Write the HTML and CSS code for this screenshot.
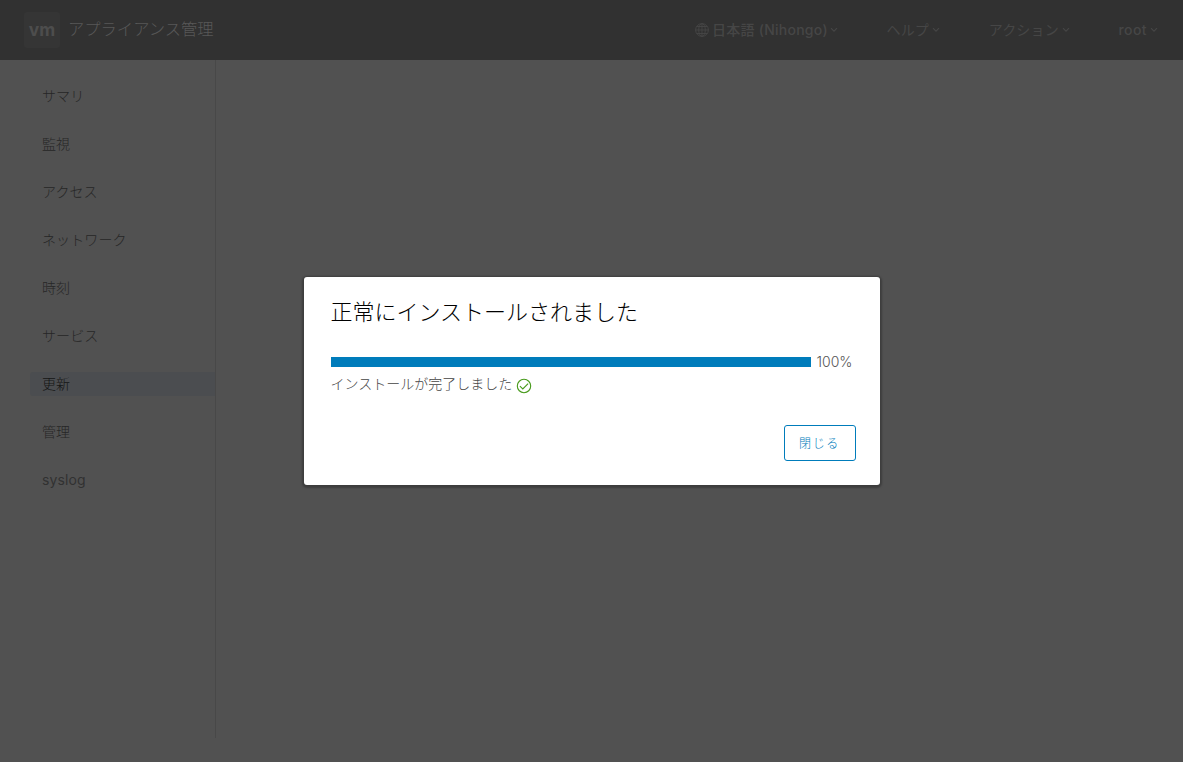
FILE: index.html
```html
<!DOCTYPE html>
<html lang="ja">
<head>
<meta charset="utf-8">
<title>アプライアンス管理</title>
<link rel="stylesheet" href="styles.css">
</head>
<body>
<div class="app">
  <header class="header">
    <span class="logo">vm</span>
    <h1 class="title">アプライアンス管理</h1>
    <nav class="actions">
      <span class="action">
        <svg class="globe" width="14" height="14" viewBox="0 0 14 14" fill="none" stroke="#464646" stroke-width=".9"><circle cx="7" cy="7" r="6.4"/><ellipse cx="7" cy="7" rx="3.3" ry="6.4"/><path d="M7 .6V13.4M1.6 3.5H12.4M.6 7H13.4M1.6 10.5H12.4"/></svg>
        <span class="language">日本語 (Nihongo)</span>
        <svg class="caret" width="8" height="6" viewBox="0 0 8 6"><path d="M1 1.2L4 4.2L7 1.2"/></svg>
      </span>
      <span class="action"><span class="kana">ヘルプ</span><svg class="caret" width="8" height="6" viewBox="0 0 8 6"><path d="M1 1.2L4 4.2L7 1.2"/></svg></span>
      <span class="action"><span class="kana">アクション</span><svg class="caret" width="8" height="6" viewBox="0 0 8 6"><path d="M1 1.2L4 4.2L7 1.2"/></svg></span>
      <span class="action"><span class="user">root</span><svg class="caret" width="8" height="6" viewBox="0 0 8 6"><path d="M1 1.2L4 4.2L7 1.2"/></svg></span>
    </nav>
  </header>
  <aside class="sidebar">
    <a class="item">サマリ</a>
    <a class="item">監視</a>
    <a class="item">アクセス</a>
    <a class="item">ネットワーク</a>
    <a class="item">時刻</a>
    <a class="item">サービス</a>
    <a class="item active">更新</a>
    <a class="item">管理</a>
    <a class="item latin">syslog</a>
  </aside>
</div>
<div class="overlay">
  <section class="modal">
    <h2 class="heading">正常にインストールされました</h2>
    <div class="progress"><div class="bar"></div><span class="percent">100%</span></div>
    <div class="status">
      <span>インストールが完了しました</span>
      <svg width="16" height="16" viewBox="0 0 16 16" fill="none" stroke="#479a1b" stroke-width="1.1"><circle cx="8" cy="8" r="6.7"/><path d="M3.9 8.2L6.8 10.9L12.1 5.6"/></svg>
    </div>
    <div class="footer"><button class="close">閉じる</button></div>
  </section>
</div>
</body>
</html>
```
FILE: styles.css
```css
* { box-sizing: border-box; }
body {
  margin: 0;
  background: #515151;
  font-family: "Noto Sans CJK JP", sans-serif;
  font-size: 14px;
  font-weight: 300;
}
.app { height: 762px; display: flex; flex-direction: column; overflow: hidden; }
.header {
  height: 60px;
  flex: none;
  display: flex;
  align-items: center;
  padding: 0 25px 0 24px;
  background: #313131;
}
.logo {
  width: 36px;
  height: 36px;
  border-radius: 3px;
  background: #353535;
  color: #4d4d4d;
  font: 700 17.5px/35px Inter, sans-serif;
  text-align: center;
}
.title {
  margin: 0 0 4px 8px;
  color: #585858;
  font-size: 16.3px;
  font-weight: 300;
  line-height: 24px;
}
.actions { margin-left: auto; display: flex; gap: 48.6px; color: #464646; }
.action { display: flex; align-items: center; line-height: 24px; font-weight: 400; white-space: nowrap; }
.globe { margin-right: 3px; }
.language, .user { font-family: Inter, "Noto Sans CJK JP", sans-serif; font-weight: 500; }
.language { letter-spacing: .25px; }
.language + .caret { margin-left: 2px; }
.user { letter-spacing: .4px; }
.kana { margin-bottom: 2px; letter-spacing: .2px; }
.caret { margin-left: 3px; fill: none; stroke: #464646; stroke-width: 1.1; }
.sidebar {
  width: 216px;
  height: 678px;
  padding: 24px 0 0 30px;
  display: flex;
  flex-direction: column;
  gap: 24px;
  border-right: 1px solid #484848;
}
.item {
  height: 24px;
  padding-left: 12px;
  line-height: 23px;
  letter-spacing: .1px;
  color: #262626;
  border-radius: 3px 0 0 3px;
}
.item.active { background: #4b4d50; color: #151515; }
.item.latin { font-family: Inter, sans-serif; font-weight: 400; color: #313131; }
.overlay { position: absolute; inset: 0; display: grid; place-items: center; }
.modal {
  width: 576px;
  height: 208px;
  padding: 18px 24px 24px 27px;
  background: #fff;
  border-radius: 3px;
  box-shadow: 0 1px 2px 2px rgba(0, 0, 0, .25);
}
.heading { margin: 0; font-size: 22px; line-height: 30px; font-weight: 300; color: #000; }
.progress { display: flex; align-items: center; height: 20px; margin-top: 27px; }
.bar { width: 480px; height: 10px; background: #007cbb; }
.percent { margin: 0 0 1px 6px; font-family: Inter, sans-serif; font-weight: 300; color: #565656; }
.status { display: flex; align-items: center; height: 24px; color: #444; }
.status span { margin-bottom: 2px; }
.status svg { margin: 3px 0 0 4px; }
.footer { display: flex; justify-content: flex-end; margin-top: 29px; }
.close {
  width: 72px;
  height: 36px;
  padding: 0 0 2px;
  border: 1px solid #007cbb;
  border-radius: 3px;
  background: transparent;
  color: #007cbb;
  font: 300 12px "Noto Sans CJK JP", sans-serif;
  letter-spacing: 1.6px;
}
```
